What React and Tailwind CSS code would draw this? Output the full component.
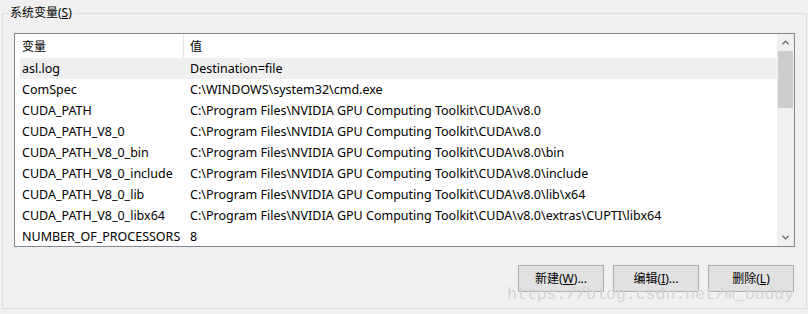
import { ChevronUp, ChevronDown } from "lucide-react";

const rows = [
  ["asl.log", "Destination=file"],
  ["ComSpec", "C:\\WINDOWS\\system32\\cmd.exe"],
  ["CUDA_PATH", "C:\\Program Files\\NVIDIA GPU Computing Toolkit\\CUDA\\v8.0"],
  ["CUDA_PATH_V8_0", "C:\\Program Files\\NVIDIA GPU Computing Toolkit\\CUDA\\v8.0"],
  ["CUDA_PATH_V8_0_bin", "C:\\Program Files\\NVIDIA GPU Computing Toolkit\\CUDA\\v8.0\\bin"],
  ["CUDA_PATH_V8_0_include", "C:\\Program Files\\NVIDIA GPU Computing Toolkit\\CUDA\\v8.0\\include"],
  ["CUDA_PATH_V8_0_lib", "C:\\Program Files\\NVIDIA GPU Computing Toolkit\\CUDA\\v8.0\\lib\\x64"],
  ["CUDA_PATH_V8_0_libx64", "C:\\Program Files\\NVIDIA GPU Computing Toolkit\\CUDA\\v8.0\\extras\\CUPTI\\libx64"],
  ["NUMBER_OF_PROCESSORS", "8"],
];

function WinButton({ label, hotkey, suffix }) {
  return (
    <button
      type="button"
      className="flex h-[27px] w-[86px] items-center justify-center border border-[#adadad] bg-[#e1e1e1] text-[12px] text-black"
    >
      {label}(<span className="underline">{hotkey}</span>){suffix}
    </button>
  );
}

export default function App() {
  return (
    <div
      className="relative h-[314px] w-[808px] overflow-hidden bg-[#f0f0f0] pl-[2px] pt-[6px] text-[12.5px] text-black"
      style={{ fontFamily: '"Noto Sans", "Noto Sans CJK SC", sans-serif' }}
    >
      {/* 分组框 */}
      <fieldset className="m-0 h-[303px] w-[805px] border border-[#dcdcdc] px-[11px] pt-[13px]">
        <legend className="ml-[-6px] px-[2px] text-[12px] leading-[14px]">
          系统变量(<span className="underline">S</span>)
        </legend>

        {/* 列表 */}
        <div className="flex h-[214px] w-[781px] border border-[#828790] bg-white">
          <div className="flex min-w-0 flex-1 flex-col overflow-hidden">
            <div className="flex h-[24px] shrink-0 items-center">
              <div className="flex h-full w-[169px] items-center border-r border-[#e5e5e5] pl-[7px] pt-[1px] text-[12px]">变量</div>
              <div className="pl-[6px] pt-[1px] text-[12px]">值</div>
            </div>
            {rows.map(([name, value], i) => (
              <div
                key={name}
                className={`ml-[5px] flex h-[21px] shrink-0 items-center whitespace-nowrap pt-[2px] ${i === 0 ? "bg-[#efefef]" : ""}`}
              >
                <div className="w-[170px] pl-[2px]">{name}</div>
                <div>{value}</div>
              </div>
            ))}
          </div>

          {/* 滚动条 */}
          <div className="flex w-[17px] shrink-0 flex-col bg-[#f0f0f0]">
            <div className="flex h-[17px] items-center justify-center text-[#606060]">
              <ChevronUp size={11} strokeWidth={3} />
            </div>
            <div className="mx-auto h-[57px] w-[15px] bg-[#cdcdcd]" />
            <div className="flex-1" />
            <div className="flex h-[17px] items-center justify-center text-[#606060]">
              <ChevronDown size={11} strokeWidth={3} />
            </div>
          </div>
        </div>

        {/* 按钮 */}
        <div className="mt-[18px] flex justify-end gap-[9px] pr-[1px]">
          <WinButton label="新建" hotkey="W" suffix="..." />
          <WinButton label="编辑" hotkey="I" suffix="..." />
          <WinButton label="删除" hotkey="L" suffix="" />
        </div>
      </fieldset>

      {/* 水印 */}
      <div
        className="absolute left-[507px] top-[284px] text-[16.5px] leading-[22px] text-[#d4d4d4]"
        style={{ fontFamily: '"Liberation Mono", monospace' }}
      >
        https://blog.csdn.net/m_buddy
      </div>
    </div>
  );
}
